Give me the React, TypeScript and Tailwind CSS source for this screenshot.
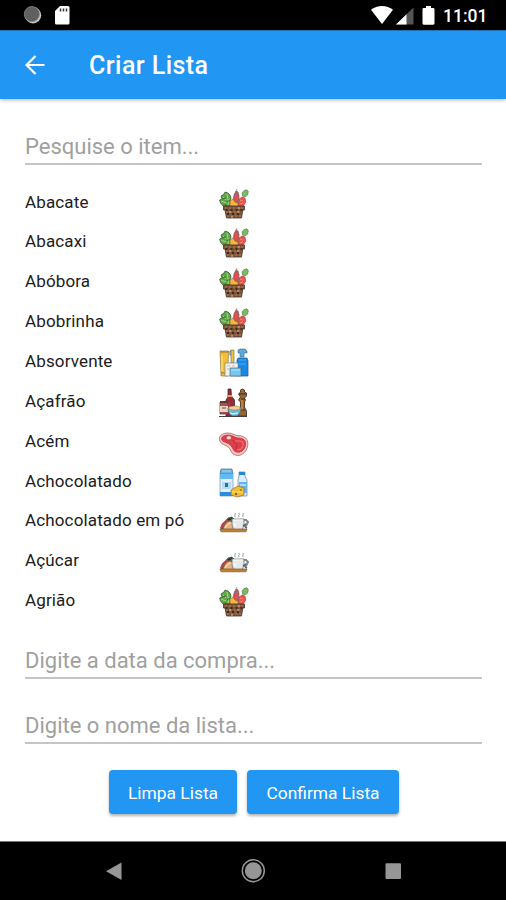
import type { ReactNode } from "react";

type Kind = "produce" | "hygiene" | "spices" | "meat" | "dairy" | "breakfast";

const items: { name: string; kind: Kind }[] = [
  { name: "Abacate", kind: "produce" },
  { name: "Abacaxi", kind: "produce" },
  { name: "Abóbora", kind: "produce" },
  { name: "Abobrinha", kind: "produce" },
  { name: "Absorvente", kind: "hygiene" },
  { name: "Açafrão", kind: "spices" },
  { name: "Acém", kind: "meat" },
  { name: "Achocolatado", kind: "dairy" },
  { name: "Achocolatado em pó", kind: "breakfast" },
  { name: "Açúcar", kind: "breakfast" },
  { name: "Agrião", kind: "produce" },
];

const drawings: Record<Kind, ReactNode> = {
  produce: (
    <>
      <path d="M24 8 20 14" stroke="#52764a" strokeWidth="1" />
      <path d="M23 4 25 1.5 28 .8 29.3 2.5 28.7 6 26 8 23.5 7Z" fill="#78bd63" stroke="#58764c" strokeWidth=".6" />
      <path d="M4 17 1.5 14 .6 11 3 10 2 7 5 5 6 3 9 4 11 6 12 9 11 12 13 17Z" fill="#61a64b" stroke="#354e2f" strokeWidth=".7" />
      <path d="m4 8 3 3m1-6 1 6m-7 1 5 2m3-4-1 6" stroke="#a4d77c" strokeWidth="1" />
      <path d="m3 10 4-1m1 4 3-2m-5 4 2 2" stroke="#35722f" strokeWidth="1" />
      <path d="M14 14 15 6l2-4 2 1 1 4-1 8Z" fill="#e44d4e" stroke="#725052" strokeWidth=".7" />
      <path d="m17 2 1-2m-3 5 4 1" stroke="#6b8790" strokeWidth=".8" />
      <path d="M19 17 20 10l3-2 3 1 .8 4-2.5 4Z" fill="#ed524c" stroke="#984946" strokeWidth=".6" />
      <path d="m21 11 3 1m-3 3 3-1" stroke="#f5a078" strokeWidth=".8" />
      <path d="M11 17v-5l3-2 2 3 3 1v4Z" fill="#f2b73f" stroke="#74613b" strokeWidth=".6" />
      <path d="M4.5 17h21v4h-1.7L22.5 29h-15L6 21H4.5Z" fill="#80563b" stroke="#49352b" strokeWidth=".8" />
      <path d="M6 19h18M7 23h16M8 27h14" stroke="#ae7d57" strokeWidth="1" strokeDasharray="2 2" />
      <path d="M6.5 21h17M8 25h15" stroke="#251b18" strokeWidth="1.5" strokeDasharray="2 3" />
      <path d="M10 23h2m6 0h2m-8 5h2m5-9h2" stroke="#dfb688" strokeWidth="1" />
    </>
  ),
  hygiene: (
    <>
      <path d="M1 3h8.5l-.7 25H2Z" fill="#f4bd38" stroke="#7a693e" strokeWidth=".6" />
      <path d="M1.4 4h8M2 25h7" stroke="#9a752e" strokeWidth="1" /><path d="M3 7v16" stroke="#ffe064" strokeWidth="1.3" />
      <path d="M12 2h3v13h-3Z" fill="#eac543" stroke="#726943" strokeWidth=".6" /><path d="M12 3h-1v4h1" stroke="#536774" strokeWidth="1" />
      <path d="M21 1h5l2 2v2h-3v4h-4V5h-2V2Z" fill="#5ba9da" stroke="#4a6579" strokeWidth=".6" />
      <path d="M19 10h9l1 3v15H18V12Z" fill="#1689e4" stroke="#2f5573" strokeWidth=".7" />
      <path d="M20 12h7M20 16h7" stroke="#48aef0" strokeWidth="1" />
      <path d="M6 15h13v13H6Z" fill="#f4f1ed" stroke="#73889a" strokeWidth=".7" /><path d="M8 18h3m2 0h3m-8 3h2" stroke="#b5bec2" />
      <path d="M11 20h11v8H11Z" fill="#77c8f1" stroke="#506a7b" strokeWidth=".7" /><path d="M12 22h9" stroke="#b1e3ff" />
    </>
  ),
  spices: (
    <>
      <path d="M9 1h3l.5 7 3 4v16H7V12l2-3Z" fill="#9a273b" stroke="#46313a" strokeWidth=".8" />
      <path d="M8 8h5" stroke="#d6ad3b" strokeWidth="2" /><path d="M10 14v9" stroke="#d84755" strokeWidth="1" />
      <path d="m23.5 1 2 1v2l2 1v3l-2 2 1 2-1 2v5l2 4v5h-8v-5l2-4v-5l-2-2 2-3-2-3 2-2V2Z" fill="#9a6630" stroke="#4c3627" strokeWidth=".9" />
      <path d="M20 6h7m-5 5h4m-5 11h5" stroke="#302721" strokeWidth="1.2" /><path d="M23 12v10" stroke="#d49646" strokeWidth="1.2" />
      <path d="M1 14h8v12H1Z" fill="#b24d4f" stroke="#573e3e" strokeWidth=".8" /><path d="M1 14h8" stroke="#5c3539" strokeWidth="2" />
      <path d="M1 18h8v6H1Z" fill="#edd2bf" /><path d="M3 20h4" stroke="#8b777a" strokeWidth="1.5" />
      <path d="M9 20h13c0 4-2 7-4 8h-5c-3-2-4-4-4-8Z" fill="#6eb4d2" stroke="#4a6873" strokeWidth=".8" />
      <ellipse cx="15.5" cy="20" rx="6" ry="2" fill="#f2d28b" stroke="#a47450" strokeWidth=".6" /><path d="m11 25 3 1 5-1" stroke="#bbecfa" strokeWidth="1.5" />
      <path d="M0 28.5h28" stroke="#493d3b" strokeWidth="1" />
    </>
  ),
  meat: (
    <g transform="translate(0 3)">
      <path d="M.5 9C-.7 4.7 4 2.1 9 2c5 0 6.5 2.8 11 2.7 7 .1 10 5.3 8.5 11-1.5 6-6.5 9.7-11.5 8.5-6-1.3-4.2-6.3-9-9C5.1 13.3 1.200 13 .5 9Z" fill="#f7c7bd" stroke="#a34c55" strokeWidth=".7" />
      <path d="M2.5 8c0-3 4-4 7-4 4.800.3 6.500 3 10.500 3 5.500 0 7.500 3.600 6.400 8-1 4.200-4.800 7-8.800 6.100-4.600-1.100-3-5.500-8-8.400C6.500 11 3 11 2.500 8Z" fill="#dd3e4b" stroke="#a82d3c" strokeWidth=".6" />
      <path d="M16 10c6-.5 9 0 8 4.500-.8 3-3 4.500-6 4.500" stroke="#f06970" strokeWidth="1.2" /><path d="m14 9 4 5-1 4" stroke="#b92e3e" strokeWidth="1" />
      <ellipse cx="9.8" cy="6.8" rx="2.5" ry="2" fill="#ffe5d6" stroke="#b85356" strokeWidth=".7" />
    </g>
  ),
  dairy: (
    <>
      <path d="M2 1h11l1 5H1Z" fill="#65b4e9" stroke="#4a718a" strokeWidth=".7" /><path d="M1 6h13v22H1Z" fill="#e1f0fb" stroke="#6c92aa" strokeWidth=".7" />
      <path d="M1 6h13v5H1Z" fill="#65baf0" /><path d="M1 24h13v4H1Z" fill="#2a8dde" />
      <path d="M3 14h9v7H3Z" fill="#b4daf4" /><path d="M6 15h3v4H6Z" fill="#286da7" /><path d="M3 3h9" stroke="#9cdaff" strokeWidth="1" />
      <path d="M20 4h6v4l2 4v16h-9V12l1-4Z" fill="#d8edfb" stroke="#668396" strokeWidth=".7" />
      <path d="M20 4h6v3h-6Z" fill="#2588ce" /><path d="M20 14h8v11h-8Z" fill="#65b3e8" /><path d="M21 17h6" stroke="#d7f2ff" strokeWidth="1.3" />
      <path d="m12 22 7-4 6 2v7l-7 2-6-2Z" fill="#f5bb31" stroke="#926e2d" strokeWidth=".7" /><path d="M13 24h11" stroke="#ffdf58" strokeWidth="1.2" />
      <circle cx="17" cy="26" r="1.2" fill="#81612d" /><circle cx="22" cy="22" r="1" fill="#94722e" />
    </>
  ),
  breakfast: (
    <>
      <path d="M2 21c1-5 5-7 7-10l4-1 3 3-1 9H2Z" fill="#556d3f" stroke="#48463b" strokeWidth=".8" />
      <path d="m2 21 2-4 3-2 2-3" stroke="#bc4053" strokeWidth="2.2" />
      <path d="m9 13 4-2" stroke="#29382b" strokeWidth="1.5" />
      <path d="M4 23c1-5 3-8 7-9l4 2v7Z" fill="#e7b27d" stroke="#846146" strokeWidth=".7" /><path d="m6 21 3-4 4-1" stroke="#ffdcad" strokeWidth="1.2" />
      <path d="M24 13h3l2 2-2 4h-3" stroke="#7d898e" strokeWidth="2" />
      <path d="M13 12h12v6l-2 5h-8l-2-5Z" fill="#e5e9e9" stroke="#697377" strokeWidth=".8" />
      <path d="M14 13h10M16 16v4" stroke="#fff" strokeWidth="1.2" /><path d="M16 10c-1-2 1-2 0-4m4 4c-1-2 1-2 0-4m4 4c-1-2 1-2 0-4" stroke="#89969a" strokeWidth=".9" />
      <path d="m24 19 3-2m-1 3 2 1" stroke="#5e696e" strokeWidth="1.6" />
      <path d="M1 22h27l-1 2.800H2Z" fill="#bd8037" stroke="#815c35" strokeWidth=".7" />
    </>
  ),
};

function ItemIcon({ kind }: { kind: Kind }) {
  return (
    <svg className="mt-[8.5px] size-[30px]" viewBox="0 0 30 30" fill="none">
      {drawings[kind]}
    </svg>
  );
}

function Field({ placeholder, className = "" }: { placeholder: string; className?: string }) {
  return (
    <div className={`ml-[25px] mr-[24px] h-[34px] border-b-2 border-[#c5c5c5] ${className}`}>
      <input
        type="text"
        aria-label={placeholder}
        placeholder={placeholder}
        className="block h-[32px] w-full bg-transparent text-[22px] leading-[32px] text-[#555] outline-none placeholder:text-[#a0a0a0] placeholder:opacity-100"
      />
    </div>
  );
}

function StatusBar() {
  return (
    <div className="flex h-[30px] shrink-0 items-start justify-between bg-black">
      <svg className="h-[30px] w-[80px]" viewBox="0 0 80 30">
        <circle cx="33" cy="15.3" r="8.2" fill="#c9c9c9" />
        <circle cx="31.9" cy="14.1" r="7.6" fill="#606060" stroke="#888" strokeWidth=".8" />
        <path d="M60 6h8q1.5 0 1.5 1.5V23q0 1.5-1.5 1.5H56.5q-1.5 0-1.5-1.5V11Z" fill="#fff" />
        <path d="M60.5 8.500v3m3-3v3m3-3v3" stroke="#333" strokeWidth="1.5" />
      </svg>
      <div className="flex">
        <svg className="h-[30px] w-[76px]" viewBox="367 0 76 30">
          <path d="M371 9.8C377 4.7 387 4.7 393 9.8L382 24Z" fill="#fff" />
          <path d="M396 24.5 413.500 7.500v17Z" fill="#555" /><path d="M396 24.5 406.500 14.200v10.300Z" fill="#fff" />
          <path d="M426 6h5v2h2.200q1.300 0 1.300 1.300v14q0 1.400-1.300 1.400h-9.400q-1.300 0-1.300-1.400v-14Q422.500 8 423.800 8H426Z" fill="#fff" />
        </svg>
        <span className="w-[63px] text-[17.5px] font-medium leading-[32px] text-white">11:01</span>
      </div>
    </div>
  );
}

export default function App() {
  return (
    <main className="flex h-[900px] w-[506px] flex-col overflow-hidden bg-white font-[Roboto,sans-serif]">
      <StatusBar />
      <header className="z-10 flex h-[69px] shrink-0 items-center border-t border-[#1d70b4] bg-[#2196f3] shadow-[0_1px_4px_rgba(0,0,0,0.3)]">
        <button type="button" aria-label="Voltar" className="ml-[25px] w-[64px]">
          <svg className="size-[20px]" viewBox="0 0 20 20" fill="none" stroke="#fff" strokeWidth="2.2">
            <path d="M19.5 10H2M10.500 1 1.500 10l9 9" />
          </svg>
        </button>
        <h1 className="mt-[1px] text-[25px] font-medium leading-[32px] tracking-[0.45px] text-white">Criar Lista</h1>
      </header>
      <Field placeholder="Pesquise o item..." className="mt-[32px]" />
      <ul className="mt-[15px] flex h-[438.5px] shrink-0 flex-col">
        {items.map(({ name, kind }) => (
          <li key={name} className="grid flex-1 grid-cols-[194px_30px] items-start pl-[25px]">
            <span className="pt-[9.5px] text-[17px] leading-[24px] tracking-[0.14px] text-[#202020]">{name}</span>
            <ItemIcon kind={kind} />
          </li>
        ))}
      </ul>
      <Field placeholder="Digite a data da compra..." className="mt-[26.5px]" />
      <Field placeholder="Digite o nome da lista..." className="mt-[31px]" />
      <div className="ml-[109px] mt-[26px] flex gap-[10px]">
        <button type="button" className="h-[44px] w-[128px] rounded-[4px] bg-[#2196f3] pt-[2px] text-[17.4px] leading-[42px] text-white shadow-[0_2px_3px_rgba(0,0,0,0.3)]">Limpa Lista</button>
        <button type="button" className="h-[44px] w-[152px] rounded-[4px] bg-[#2196f3] pt-[2px] text-[17.4px] leading-[42px] text-white shadow-[0_2px_3px_rgba(0,0,0,0.3)]">Confirma Lista</button>
      </div>
      <nav className="mt-auto h-[59px] shrink-0 border-t border-[#777] bg-black">
        <svg className="h-[58px] w-full" viewBox="0 842 506 58">
          <path d="M106 871.200 121.500 862.500v17.500Z" fill="#969696" />
          <circle cx="253.300" cy="870.700" r="11" fill="none" stroke="#969696" strokeWidth="1.500" /><circle cx="253.300" cy="870.700" r="8.500" fill="#969696" />
          <rect x="385.500" y="863.300" width="15.500" height="15.700" rx="1" fill="#969696" />
        </svg>
      </nav>
    </main>
  );
}
